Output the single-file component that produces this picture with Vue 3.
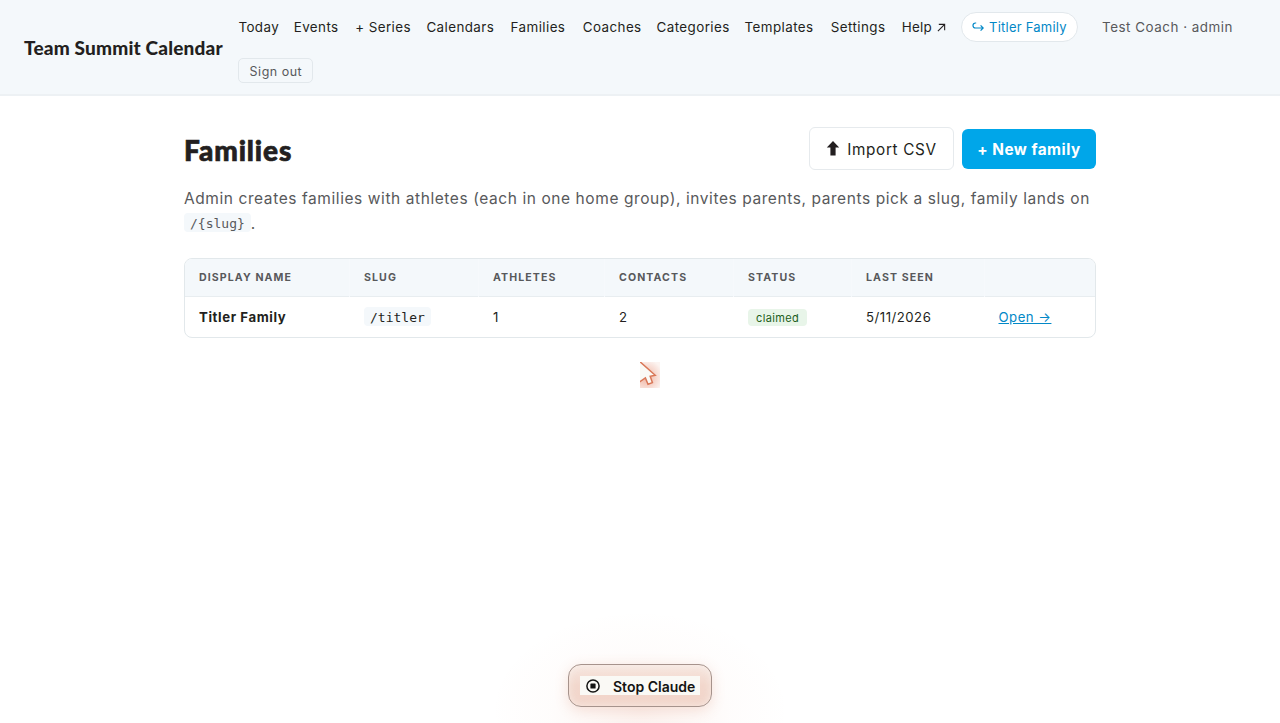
<script setup>
import { ref } from 'vue';

const navItems = ref([
  { label: 'Today', width: 39.3 },
  { label: 'Events', width: 45.5 },
  { label: '+ Series', width: 55.2 },
  { label: 'Calendars', width: 68.2 },
  { label: 'Families', width: 56.2 },
  { label: 'Coaches', width: 57.8 },
  { label: 'Categories', width: 72 },
  { label: 'Templates', width: 70.3 },
  { label: 'Settings', width: 55 },
]);

const columns = ['Display name', 'Slug', 'Athletes', 'Contacts', 'Status', 'Last seen', ''];

const families = ref([
  { name: 'Titler Family', slug: '/titler', athletes: 1, contacts: 2, status: 'claimed', lastSeen: '5/11/2026' },
]);
</script>

<template>
  <div class="page">
    <header>
      <div class="brand">Team Summit Calendar</div>
      <nav>
        <a v-for="item in navItems" :key="item.label" :style="{ width: item.width + 'px' }">{{ item.label }}</a>
        <a class="help">Help
          <svg width="9" height="9" viewBox="0 0 10 10"><path d="M1 9 8.5 1.5M2 1.5h6.5V8" /></svg>
        </a>
        <a class="pill">
          <svg width="12" height="10" viewBox="0 0 12 10"><path d="M4.2 1H3.5a2.5 2.5 0 0 0 0 5H11M8.6 3.4 11.2 6 8.6 8.6" /></svg>
          <span>Titler Family</span>
        </a>
        <span class="who">Test Coach · admin</span>
        <button class="signout">Sign out</button>
      </nav>
    </header>

    <main>
      <div class="title-row">
        <h1>Families</h1>
        <div class="actions">
          <button class="import">
            <svg width="14" height="15" viewBox="0 0 14 15"><path d="M7 0 13.2 6.4H9.6V14.5H4.4V6.4H.8z" /></svg>
            <span>Import CSV</span>
          </button>
          <button class="new">+ New family</button>
        </div>
      </div>
      <p>
        <span class="line">Admin creates families with athletes (each in one home group), invites parents, parents pick a slug, family lands on</span>
        <code>/{slug}</code><span class="dot">.</span>
      </p>

      <div class="table">
        <div class="row head">
          <div v-for="column in columns" :key="column" class="cell">{{ column }}</div>
        </div>
        <div v-for="family in families" :key="family.slug" class="row">
          <div class="cell"><strong>{{ family.name }}</strong></div>
          <div class="cell"><code>{{ family.slug }}</code></div>
          <div class="cell">{{ family.athletes }}</div>
          <div class="cell">{{ family.contacts }}</div>
          <div class="cell"><span class="badge">{{ family.status }}</span></div>
          <div class="cell date">{{ family.lastSeen }}</div>
          <div class="cell"><a class="open">Open →</a></div>
        </div>
      </div>
    </main>

    <div class="cursor">
      <svg width="20" height="26" viewBox="0 0 20 26"><path d="M-2-2 15.2 13.2 10.2 14.2 12.4 20.6 8 22.2 5.4 16 -2 21z" /></svg>
    </div>

    <div class="glow"></div>
    <button class="stop">
      <span class="stop-inner">
        <svg width="14" height="14" viewBox="0 0 14 14"><circle cx="7" cy="7" r="6.1" /><rect x="4.4" y="4.4" width="5.2" height="5.2" rx=".7" /></svg>
        <span>Stop Claude</span>
      </span>
    </button>
  </div>
</template>

<style>
body {
  margin: 0;
  background: #fff;
  overflow: hidden;
}
</style>

<style scoped>
.page {
  position: relative;
  height: 723px;
  overflow: hidden;
  box-sizing: border-box;
  font-family: Inter, "Noto Sans", sans-serif;
  color: #231f20;
}

button {
  font-family: inherit;
  box-sizing: border-box;
}

svg {
  fill: none;
  stroke: currentColor;
  stroke-width: 1.2;
}

header {
  display: flex;
  align-items: center;
  gap: 16px;
  height: 96px;
  padding: 0 24px;
  box-sizing: border-box;
  background: #f4f8fb;
  border-bottom: 2px solid #edf1f4;
}

.brand {
  width: 198.4px;
  flex-shrink: 0;
  padding-top: 1px;
  font-family: Lato, sans-serif;
  font-size: 19px;
  font-weight: 900;
  letter-spacing: 0.18px;
  white-space: nowrap;
}

nav {
  display: flex;
  flex-wrap: wrap;
  align-items: center;
  gap: 16px;
  width: 1017.6px;
  font-size: 13.4px;
  letter-spacing: 0.42px;
}

nav a {
  white-space: nowrap;
}

nav .help {
  width: 43.2px;
  letter-spacing: 0.2px;
}

.help svg {
  margin-left: 1px;
}

nav .pill {
  display: flex;
  align-items: center;
  gap: 5px;
  width: 117px;
  height: 30px;
  padding: 1px 10px 0 10px;
  box-sizing: border-box;
  border: 1px solid #e2e8ec;
  border-radius: 15px;
  background: #fff;
  color: #0288c7;
  font-size: 13px;
  letter-spacing: 0.23px;
}

.who {
  margin-left: 8px;
  color: #58595b;
  letter-spacing: 0.52px;
}

.signout {
  width: 75px;
  height: 25px;
  padding: 2px 0 0;
  border: 1px solid #e2e8ec;
  border-radius: 5px;
  background: transparent;
  color: #58595b;
  font-size: 12.5px;
  letter-spacing: 0.5px;
}

main {
  width: 912px;
  margin: 0 auto;
  padding-top: 31px;
}

.title-row {
  display: flex;
  align-items: center;
  justify-content: space-between;
  height: 43px;
}

h1 {
  margin: 3px 0 0;
  font-family: Lato, sans-serif;
  font-size: 28px;
  font-weight: 900;
  letter-spacing: 0.9px;
  -webkit-text-stroke: 0.7px #231f20;
}

.actions {
  display: flex;
  align-items: center;
  gap: 8px;
}

.import,
.new {
  border-radius: 6px;
  padding: 2px 0 0;
  font-size: 15.3px;
}

.import {
  display: flex;
  align-items: center;
  justify-content: center;
  gap: 7px;
  width: 145px;
  height: 43px;
  border: 1px solid #e6eaed;
  background: #fff;
  color: #231f20;
  letter-spacing: 0.65px;
}

.import svg {
  margin-bottom: 2px;
  fill: currentColor;
  stroke: none;
}

.new {
  width: 134px;
  height: 40px;
  border: 0;
  background: #00a6e9;
  color: #fff;
  font-weight: 700;
  letter-spacing: 0.5px;
}

p {
  margin: 17px 0 22px;
  font-size: 15.5px;
  line-height: 24.5px;
  color: #58595b;
}

.line {
  display: block;
  white-space: nowrap;
  letter-spacing: 0.58px;
}

code {
  display: inline-block;
  position: relative;
  top: -1px;
  padding: 2px 6px 0;
  border-radius: 4px;
  background: #f4f8fb;
  font-family: "DejaVu Sans Mono", monospace;
  font-size: 13px;
  line-height: 17px;
}

.table {
  border: 1px solid #e2e8eb;
  border-radius: 8px;
  box-sizing: border-box;
  height: 80px;
  overflow: hidden;
}

.row {
  display: grid;
  grid-template-columns: 165px 129px 126px 129px 118px 132.5px 1fr;
  height: 41px;
  align-items: center;
  font-size: 13.2px;
}

.cell {
  padding-left: 14px;
  white-space: nowrap;
}

.head {
  height: 37.5px;
  box-sizing: border-box;
  align-items: stretch;
  background: #f4f8fb;
  border-bottom: 1px solid #e8edf0;
  color: #58595b;
  font-size: 10.6px;
  line-height: 38px;
  font-weight: 700;
  letter-spacing: 1.08px;
  text-transform: uppercase;
}

.head .cell:not(:last-child) {
  border-right: 1px solid #f6f9fc;
}

.row strong {
  font-weight: 700;
  letter-spacing: 0.6px;
}

.badge {
  display: inline-block;
  padding: 1px 8px 0;
  border-radius: 4px;
  background: #e8f5e9;
  color: #1b5e20;
  font-size: 11px;
  line-height: 16px;
  letter-spacing: 0.35px;
}

.date {
  letter-spacing: 0.5px;
}

.open {
  color: #0288c7;
  text-decoration: underline;
  letter-spacing: 0.5px;
}

/* overlays drawn above the page */
.cursor {
  position: absolute;
  left: 640px;
  top: 362px;
  width: 20px;
  height: 26px;
  overflow: hidden;
  background: radial-gradient(circle at 6px 15px, #efb5a3 0, #f5cec2 35%, #fcf4f1 85%);
}

.cursor svg {
  display: block;
  fill: #faf9f5;
  stroke: #d97757;
  stroke-width: 1.5;
}

.glow {
  position: absolute;
  left: 490px;
  top: 610px;
  width: 300px;
  height: 200px;
  background: radial-gradient(closest-side, rgba(217, 119, 87, 0.1), rgba(217, 119, 87, 0.02) 60%, transparent);
}

.stop {
  position: absolute;
  left: 568px;
  top: 664px;
  width: 144px;
  height: 43px;
  padding: 0;
  border: 1px solid #a6938c;
  border-radius: 13px;
  background: linear-gradient(#f7e7e0, #f2d7cc 50%, #f2d5ca);
  box-shadow: inset 0 0 8px rgba(250, 249, 245, 0.6), 0 3px 14px rgba(217, 119, 87, 0.2);
}

.stop-inner {
  display: flex;
  align-items: center;
  gap: 13px;
  width: 120px;
  height: 19px;
  margin: 0 auto;
  padding-left: 6px;
  box-sizing: border-box;
  background: #faf9f5;
  color: #141413;
  font-family: Inter, sans-serif;
  font-size: 14px;
  line-height: 21px;
  font-weight: 600;
  white-space: nowrap;
}

.stop-inner span {
  padding-top: 2px;
}

.stop-inner svg {
  stroke-width: 1.5;
}

.stop-inner rect {
  fill: currentColor;
  stroke: none;
}
</style>
